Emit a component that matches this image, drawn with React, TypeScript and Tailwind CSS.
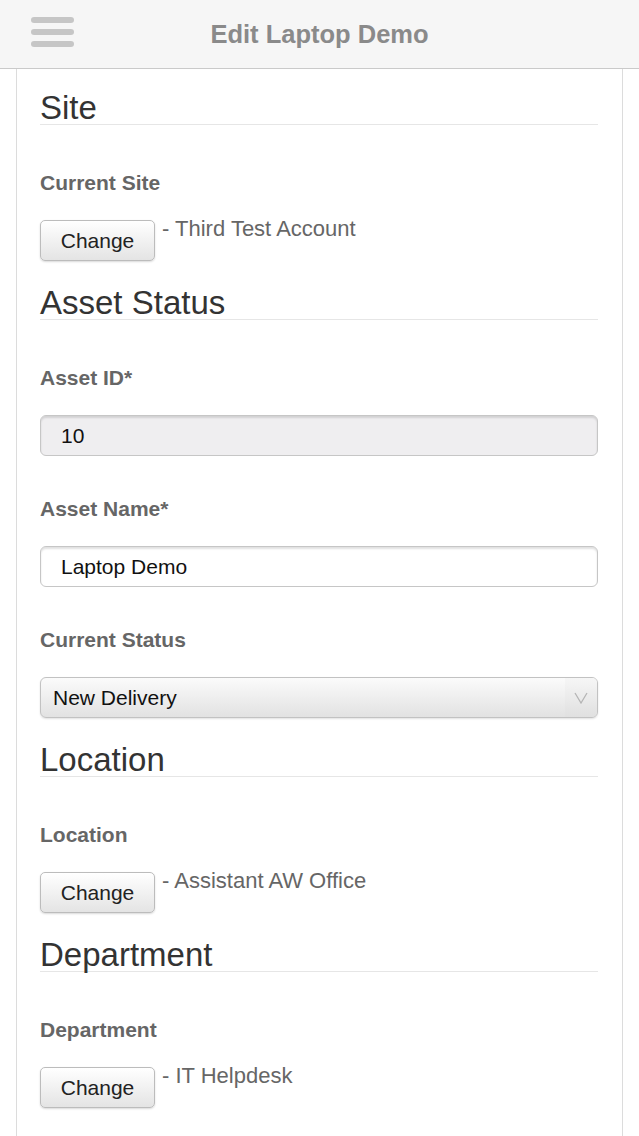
import React from "react";

function Heading({ title, first }: { title: string; first?: boolean }) {
  return (
    <div className={`${first ? "mt-[22px]" : "mt-[25px]"} h-[34px] border-b border-[#e6e6e6] text-[33px] leading-[33px] text-[#333] mb-[5px]`}>
      {title}
    </div>
  );
}

function Label({ text }: { text: string }) {
  return <div className="mt-[41px] mb-[25px] h-[24px] text-[21px] leading-[24px] font-bold text-[#666]">{text}</div>;
}

function ChangeRow({ value }: { value: string }) {
  return (
    <div className="flex items-start">
      <button className="h-[41px] w-[115px] rounded-[5px] border border-[#bcbcbc] bg-gradient-to-b from-[#ffffff] to-[#e4e4e4] text-[21px] text-[#222] shadow-[0_1px_2px_rgba(0,0,0,0.15)]">
        Change
      </button>
      <span className="ml-[7px] -mt-[3px] text-[22px] leading-[24px] text-[#666]">- {value}</span>
    </div>
  );
}

export default function App() {
  return (
    <div className="min-h-[1136px] bg-white" style={{ fontFamily: '"Liberation Sans", Arial, sans-serif' }}>
      <div className="relative flex h-[69px] items-center justify-center border-b border-[#cacaca] bg-[#f6f6f6]">
        <div className="absolute left-[31px] top-[17px] flex flex-col gap-[6px]">
          <div className="h-[6px] w-[43px] rounded-full bg-[#c6c6c6]" />
          <div className="h-[6px] w-[43px] rounded-full bg-[#c6c6c6]" />
          <div className="h-[6px] w-[43px] rounded-full bg-[#c6c6c6]" />
        </div>
        <span className="text-[25.5px] font-bold text-[#8a8a8a]">Edit Laptop Demo</span>
      </div>
      <div className="mx-[16px] flex min-h-[1067px] flex-col border-x border-[#dcdcdc] pl-[23px] pr-[24px]">
        <Heading title="Site" first />
        <Label text="Current Site" />
        <ChangeRow value="Third Test Account" />

        <Heading title="Asset Status" />
        <Label text="Asset ID*" />
        <div className="flex h-[41px] shrink-0 items-center rounded-[6px] border border-[#c6c6c6] bg-[#efeef0] pl-[20px] text-[21px] text-[#111] shadow-[inset_0_2px_2px_rgba(0,0,0,0.12)]">
          10
        </div>
        <Label text="Asset Name*" />
        <div className="flex h-[41px] shrink-0 items-center rounded-[6px] border border-[#c6c6c6] bg-white pl-[20px] text-[21px] text-[#111] shadow-[inset_0_2px_2px_rgba(0,0,0,0.12)]">
          Laptop Demo
        </div>
        <Label text="Current Status" />
        <div className="flex h-[41px] shrink-0 items-center overflow-hidden rounded-[6px] border border-[#c2c2c2] bg-gradient-to-b from-[#fbfbfb] to-[#e2e2e2] text-[21px] text-[#111] shadow-[0_1px_2px_rgba(0,0,0,0.12)]">
          <span className="flex-1 pl-[12px]">New Delivery</span>
          <div className="flex h-full w-[32px] items-center justify-center bg-gradient-to-b from-[#f6f6f6] to-[#e0e0e0]">
            <svg width="14" height="12" viewBox="0 0 14 12">
              <path d="M1 1 L7 11 L13 1" fill="none" stroke="#b5b5b5" strokeWidth="1.3" />
            </svg>
          </div>
        </div>

        <Heading title="Location" />
        <Label text="Location" />
        <ChangeRow value="Assistant AW Office" />

        <Heading title="Department" />
        <Label text="Department" />
        <ChangeRow value="IT Helpdesk" />
      </div>
    </div>
  );
}
